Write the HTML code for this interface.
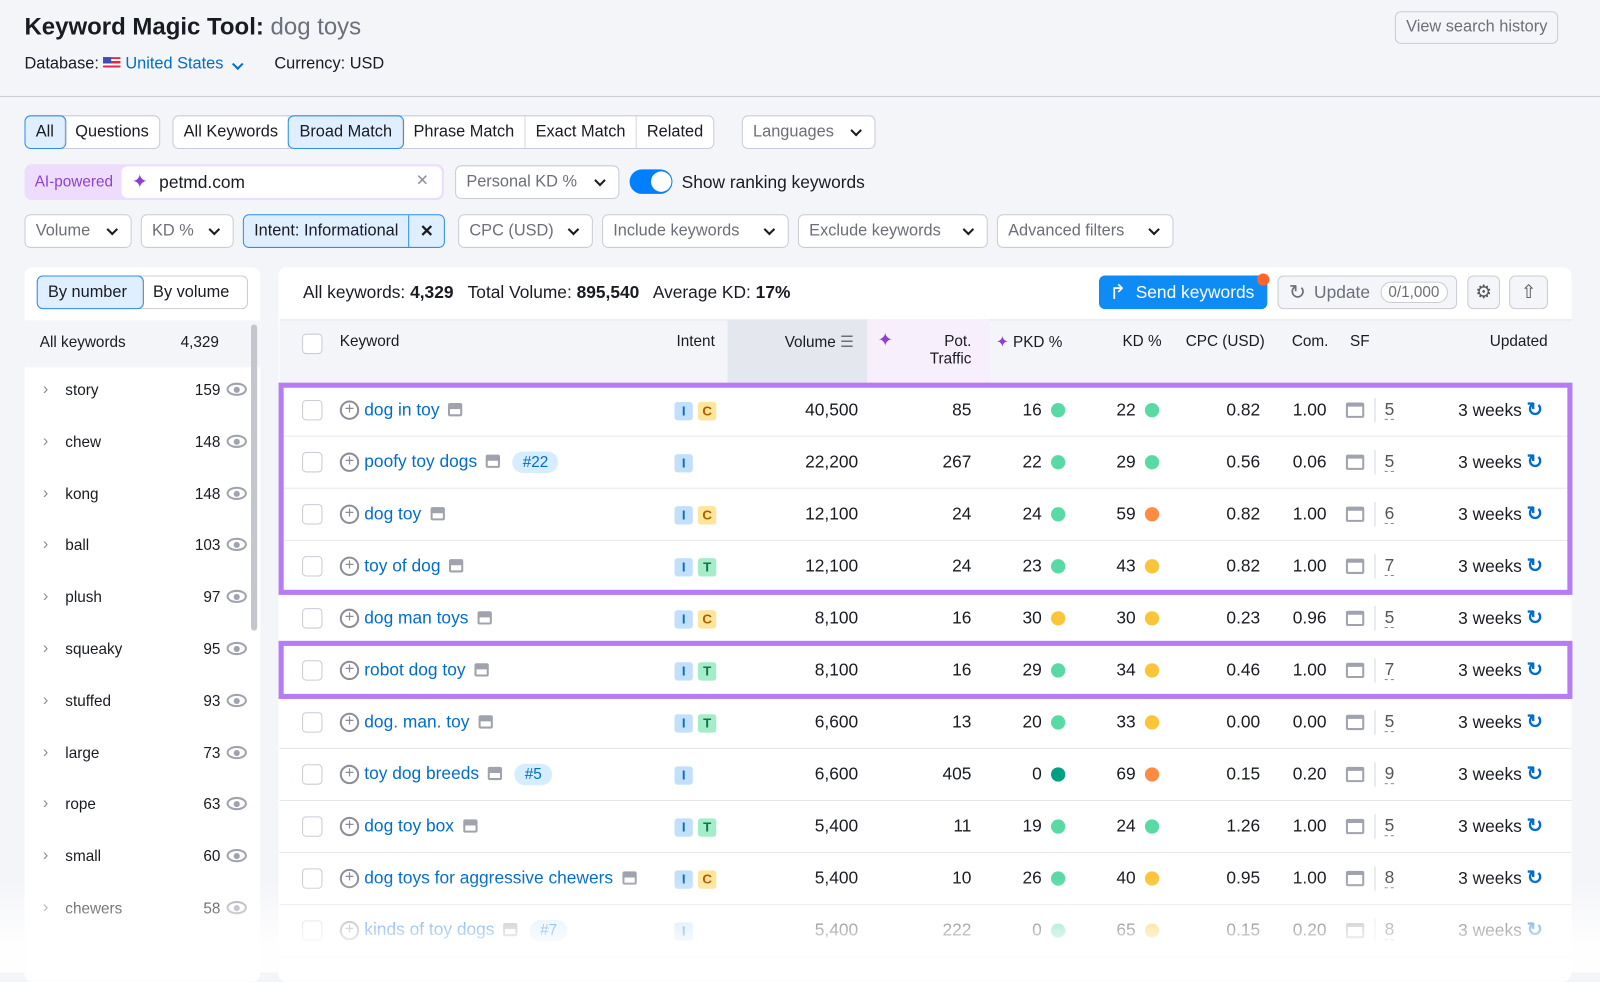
<!DOCTYPE html>
<html><head><meta charset="utf-8"><style>
*{box-sizing:border-box;margin:0;padding:0}
html,body{width:1600px;height:953px;overflow:hidden;background:#f4f5f9}
#w{position:absolute;left:0;top:0;width:1568px;height:934px;transform:scale(1.0204);transform-origin:0 0;font-family:"Liberation Sans",Arial,sans-serif;color:#191b23;font-size:16px}
.a{position:absolute;white-space:nowrap}
.btn{position:absolute;height:33px;border:1px solid #c9ccd6;background:#fff;border-radius:6px;display:flex;align-items:center;font-size:16px;color:#191b23}
.seg{height:100%;display:flex;align-items:center;padding:0 10px;border-right:1px solid #d5d7df}
.seg:last-child{border-right:none}
.sel{background:#e0efff;outline:1px solid #2f8cf0;border-radius:5px}
.dd{color:#6c6e79;padding:0 10px;justify-content:space-between}
.chev{display:inline-block;width:8px;height:8px;border-right:2px solid #191b23;border-bottom:2px solid #191b23;transform:rotate(45deg);margin:-4px 4px 0 12px}
.row{position:absolute;left:274px;width:1266px;height:51px;border-bottom:1px solid #e3e5ec;background:#fff;font-size:17px}
.row .a{top:50%;transform:translateY(-50%)}
.cb{width:20px;height:20px;border:1px solid #c9ccd6;border-radius:4px;background:#fff}
.kw{color:#006dca}
.bd{display:inline-block;width:18px;height:18px;border-radius:3px;font-size:13px;text-align:center;line-height:18px;font-weight:bold}
.bi{background:#c3e0fb;color:#0a6bc9}.bc{background:#fde59a;color:#b45a00}.bt{background:#a5ecc8;color:#08774a}
.dot{width:14px;height:14px;border-radius:50%}
.g{background:#59d9a4}.y{background:#fbc53a}.o{background:#ff8c42}.dg{background:#009f81}
.r{text-align:right}
.side{position:absolute;left:24px;top:262px;width:231px;height:700px;background:#fff;border-radius:8px}
.si{position:absolute;left:0;width:231px;font-size:15px}
</style></head><body><div id="w">
<div class="a" style="left:24px;top:13px;font-size:23.5px;font-weight:bold">Keyword Magic Tool: <span style="color:#6c6e79;font-weight:normal">dog toys</span></div>
<div class="a" style="left:24px;top:54px;font-size:16px">Database: <span style="display:inline-block;width:17px;height:12px;background:linear-gradient(#3c50b4 0 50%,transparent 50%) left/8px 100% no-repeat,repeating-linear-gradient(#e24 0 2px,#fff 2px 4px);vertical-align:-1px"></span> <span style="color:#006dca">United States</span><span class="chev" style="border-color:#006dca;margin-left:10px"></span><span style="margin-left:28px">Currency: USD</span></div>
<div class="btn" style="left:1367px;top:11px;height:32px;padding:0 10px;color:#6c6e79;background:#f4f5f9">View search history</div>
<div class="a" style="left:0;top:94px;width:1600px;height:1px;background:#c9ccd6"></div>

<div class="btn" style="left:24px;top:113px"><div class="seg sel">All</div><div class="seg">Questions</div></div>
<div class="btn" style="left:169px;top:113px"><div class="seg">All Keywords</div><div class="seg sel">Broad Match</div><div class="seg">Phrase Match</div><div class="seg">Exact Match</div><div class="seg">Related</div></div>
<div class="btn dd" style="left:727px;top:113px;width:131px">Languages<span class="chev"></span></div>

<div class="a" style="left:24px;top:161px;width:411px;height:35px;background:#eedcfd;border-radius:7px"></div>
<div class="a" style="left:34px;top:170px;font-size:15px;color:#8c3fd6">AI-powered</div>
<div class="a" style="left:119px;top:163px;width:314px;height:31px;background:#fff;border-radius:6px"></div>
<div class="a" style="left:129px;top:167px;font-size:19px;color:#8c3fd6">✦</div>
<div class="a" style="left:156px;top:169px;font-size:17px">petmd.com</div>
<div class="a" style="left:408px;top:166px;font-size:20px;color:#8b8e99">×</div>
<div class="btn dd" style="left:446px;top:162px;width:161px">Personal KD %<span class="chev"></span></div>
<div class="a" style="left:617px;top:166px;width:42px;height:24px;border-radius:12px;background:#0080ff"></div>
<div class="a" style="left:638px;top:168px;width:20px;height:20px;border-radius:50%;background:#fff"></div>
<div class="a" style="left:668px;top:169px;font-size:17px">Show ranking keywords</div>

<div class="btn dd" style="left:24px;top:210px;width:105px">Volume<span class="chev"></span></div>
<div class="btn dd" style="left:138px;top:210px;width:91px">KD %<span class="chev"></span></div>
<div class="btn" style="left:238px;top:210px;background:#e0efff;border-color:#2f8cf0"><div class="seg" style="border-color:#2f8cf0">Intent: Informational</div><div class="seg" style="font-weight:bold">✕</div></div>
<div class="btn dd" style="left:449px;top:210px;width:132px">CPC (USD)<span class="chev"></span></div>
<div class="btn dd" style="left:590px;top:210px;width:183px">Include keywords<span class="chev"></span></div>
<div class="btn dd" style="left:782px;top:210px;width:186px">Exclude keywords<span class="chev"></span></div>
<div class="btn dd" style="left:977px;top:210px;width:173px">Advanced filters<span class="chev"></span></div>

<div class="side">
<div class="btn" style="left:12px;top:8px;height:33px;width:207px"><div class="seg sel" style="width:103px">By number</div><div class="seg">By volume</div></div>
<div class="si" style="top:52px;height:46px;background:#f4f5f9"><span class="a" style="left:15px;top:13px">All keywords</span><span class="a" style="left:153px;top:13px">4,329</span></div>
<div class="a" style="left:222px;top:56px;width:6px;height:300px;background:#c4c6cd;border-radius:3px"></div>
</div>
<div id="sl"></div>

<div class="a" style="left:273px;top:262px;width:1267px;height:700px;background:#fff;border-radius:8px"></div>
<div class="a" style="left:297px;top:277px;font-size:17px">All keywords: <b>4,329</b> &nbsp; Total Volume: <b>895,540</b> &nbsp; Average KD: <b>17%</b></div>
<div class="a" style="left:1077px;top:270px;width:165px;height:33px;background:#0f8bf5;border-radius:6px;color:#fff;font-size:17px;line-height:33px;padding-left:36px">Send keywords</div>
<div class="a" style="left:1087px;top:274px;color:#fff;font-size:20px">↱</div>
<div class="a" style="left:1232px;top:268px;width:12px;height:12px;border-radius:50%;background:#ff642d"></div>
<div class="btn" style="left:1252px;top:270px;width:176px;padding-left:10px;color:#6c6e79;background:#f4f5f9;font-size:17px"><span style="font-size:20px;margin-right:8px">↻</span>Update<span style="margin-left:10px;border:1px solid #c9ccd6;border-radius:12px;padding:1px 7px;font-size:15px;background:#fff">0/1,000</span></div>
<div class="btn" style="left:1438px;top:270px;width:32px;justify-content:center;background:#f4f5f9;font-size:18px;color:#555">⚙</div>
<div class="btn" style="left:1479px;top:270px;width:38px;justify-content:center;background:#f4f5f9;font-size:18px;color:#555">⇧</div>

<div class="a" style="left:274px;top:313px;width:1266px;height:62px;background:#f4f5f9;border-top:1px solid #e3e5ec"></div>
<div class="a" style="left:713px;top:313px;width:137px;height:62px;background:#e5e7ee"></div>
<div class="a" style="left:850px;top:313px;width:120px;height:62px;background:#f7effb"></div>
<div class="a cb" style="left:296px;top:327px"></div>
<div class="a" style="left:333px;top:326px;font-size:15px">Keyword</div>
<div class="a" style="left:663px;top:326px;font-size:15px">Intent</div>
<div class="a" style="left:769px;top:326px;font-size:15px">Volume <span style="color:#6c6e79">☰</span></div>
<div class="a" style="left:860px;top:323px;font-size:18px;color:#8c3fd6">✦</div>
<div class="a r" style="left:900px;top:326px;font-size:15px;width:52px">Pot.<br>Traffic</div>
<div class="a" style="left:976px;top:326px;font-size:15px"><span style="color:#8c3fd6">✦</span> PKD %</div>
<div class="a" style="left:1100px;top:326px;font-size:15px">KD %</div>
<div class="a" style="left:1162px;top:326px;font-size:15px">CPC (USD)</div>
<div class="a" style="left:1266px;top:326px;font-size:15px">Com.</div>
<div class="a" style="left:1323px;top:326px;font-size:15px">SF</div>
<div class="a" style="left:1460px;top:326px;font-size:15px">Updated</div>

<div id="rows"></div>
<div class="a" style="left:273px;top:375px;width:1268px;height:208px;border:5px solid #b57cf6"></div>
<div class="a" style="left:273px;top:628px;width:1268px;height:57px;border:5px solid #b57cf6"></div>
<div class="a" style="left:0;top:860px;width:1600px;height:93px;background:linear-gradient(rgba(255,255,255,0),rgba(255,255,255,.85) 70%)"></div>
</div>
<script>
var side=[["story",159],["chew",148],["kong",148],["ball",103],["plush",97],["squeaky",95],["stuffed",93],["large",73],["rope",63],["small",60],["chewers",58]];
var h="";side.forEach(function(s,i){var y=383+i*50.8-9;h+='<div class="a" style="left:42px;top:'+(y-1)+'px;font-size:16px;color:#8b8e99">›</div><div class="a" style="left:64px;top:'+y+'px;font-size:15px">'+s[0]+'</div><div class="a r" style="left:176px;width:40px;top:'+y+'px;font-size:15px">'+s[1]+'</div><div class="a" style="left:222px;top:'+(y+1)+'px;width:20px;height:13px;border:2px solid #a0a3ad;border-radius:50%/50%"></div><div class="a" style="left:229px;top:'+(y+5)+'px;width:6px;height:6px;border-radius:50%;background:#a0a3ad"></div>'});
document.getElementById("sl").innerHTML=h;
var R=[["dog in toy","","IC","40,500",85,16,"g",22,"g","0.82","1.00",5],
["poofy toy dogs","#22","I","22,200",267,22,"g",29,"g","0.56","0.06",5],
["dog toy","","IC","12,100",24,24,"g",59,"o","0.82","1.00",6],
["toy of dog","","IT","12,100",24,23,"g",43,"y","0.82","1.00",7],
["dog man toys","","IC","8,100",16,30,"y",30,"y","0.23","0.96",5],
["robot dog toy","","IT","8,100",16,29,"g",34,"y","0.46","1.00",7],
["dog. man. toy","","IT","6,600",13,20,"g",33,"y","0.00","0.00",5],
["toy dog breeds","#5","I","6,600",405,0,"dg",69,"o","0.15","0.20",9],
["dog toy box","","IT","5,400",11,19,"g",24,"g","1.26","1.00",5],
["dog toys for aggressive chewers","","IC","5,400",10,26,"g",40,"y","0.95","1.00",8],
["kinds of toy dogs","#7","I","5,400",222,0,"g",65,"y","0.15","0.20",8]];
var o="";R.forEach(function(r,i){var top=377+i*51;
var b="";for(var k=0;k<r[2].length;k++){var c=r[2][k];b+='<span class="bd b'+c.toLowerCase()+'" style="margin-right:5px">'+c+'</span>'}
o+='<div class="row" style="top:'+top+'px">'+
'<div class="a cb" style="left:22px"></div>'+
'<div class="a" style="left:59px;width:19px;height:19px;border:2px solid #8b8e99;border-radius:50%;text-align:center;line-height:14px;color:#8b8e99;font-size:16px">+</div>'+
'<div class="a" style="left:83px"><span class="kw">'+r[0]+'</span> <span style="display:inline-block;width:14px;height:13px;border:2px solid #a0a3ad;border-top-width:6px;border-radius:2px;margin-left:4px;vertical-align:-1px"></span>'+(r[1]?'<span style="display:inline-block;margin-left:12px;background:#d6ecff;color:#006dca;border-radius:12px;padding:2px 10px;font-size:15px">'+r[1]+'</span>':'')+'</div>'+
'<div class="a" style="left:387px">'+b+'</div>'+
'<div class="a r" style="left:467px;width:100px">'+r[3]+'</div>'+
'<div class="a r" style="left:600px;width:78px">'+r[4]+'</div>'+
'<div class="a r" style="left:700px;width:47px">'+r[5]+'</div><div class="a dot '+r[6]+'" style="left:756px"></div>'+
'<div class="a r" style="left:790px;width:49px">'+r[7]+'</div><div class="a dot '+r[8]+'" style="left:848px"></div>'+
'<div class="a r" style="left:880px;width:81px">'+r[9]+'</div>'+
'<div class="a r" style="left:970px;width:56px">'+r[10]+'</div>'+
'<div class="a" style="left:1045px;width:18px;height:15px;border:2px solid #a0a3ad;border-top-width:4px;border-radius:2px"></div>'+
'<div class="a" style="left:1073px;width:1px;height:24px;background:#d5d7df"></div>'+
'<div class="a" style="left:1083px;color:#555;border-bottom:1px dashed #888;line-height:18px">'+r[11]+'</div>'+
'<div class="a" style="left:1155px">3 weeks <span style="color:#006dca;font-weight:bold;font-size:19px">↻</span></div>'+
'</div>'});
document.getElementById("rows").innerHTML=o;
</script>
</body></html>
